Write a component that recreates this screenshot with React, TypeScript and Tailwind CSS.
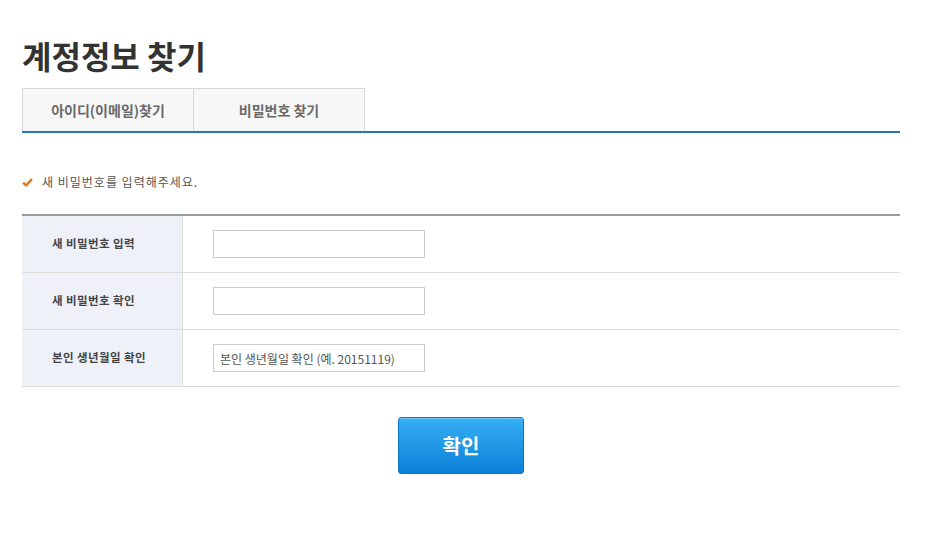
import { useState } from "react";

const font = { fontFamily: '"Noto Sans CJK KR", "Noto Sans", sans-serif' };

const rows = [
  { label: "새 비밀번호 입력", type: "password", placeholder: "" },
  { label: "새 비밀번호 확인", type: "password", placeholder: "" },
  { label: "본인 생년월일 확인", type: "text", placeholder: "본인 생년월일 확인 (예. 20151119)" },
];

const CheckMark = () => (
  <svg width="11" height="9" viewBox="0 0 11 9" className="shrink-0">
    <path d="M1 4.6 L4 7.4 L10 1.2" fill="none" stroke="#e07a1f" strokeWidth="2.6" strokeLinejoin="round" />
  </svg>
);

const App = () => {
  const [tab, setTab] = useState(1);
  const tabs = ["아이디(이메일)찾기", "비밀번호 찾기"];

  return (
    <div className="w-[926px] h-[540px] bg-white pl-[22px] pr-[26px] pt-[36px]" style={font}>
      <h1 className="text-[32px] leading-[38px] font-bold text-[#333]">계정정보 찾기</h1>

      {/* Tabs */}
      <div className="mt-[14px] flex border-b-2 border-[#1e7bb4]">
        {tabs.map((t, i) => (
          <button
            key={t}
            onClick={() => setTab(i)}
            className={`h-[43px] bg-[#f7f7f7] border-t border-[#d6d6d6] text-[14px] font-bold text-[#6a6a6a] ${
              i === 0 ? "w-[172px] border-l border-r" : "w-[171px] border-r"
            }`}
          >
            {t}
          </button>
        ))}
        <span className="hidden">{tab}</span>
      </div>

      {/* Notice */}
      <div className="mt-[40px] flex items-center gap-[9px] text-[12px] tracking-[1px] text-[#555]">
        <CheckMark />
        <span>새 비밀번호를 입력해주세요.</span>
      </div>

      {/* Form table */}
      <div className="mt-[23px] border-t-2 border-[#999]">
        {rows.map((r) => (
          <div key={r.label} className="flex h-[57px] border-b border-[#ddd]">
            <div className="w-[161px] bg-[#eef1f8] border-r border-[#ddd] flex items-center pl-[30px] text-[11.5px] tracking-[0.4px] font-bold text-[#444]">
              {r.label}
            </div>
            <div className="flex-1 flex items-center pl-[30px]">
              <input
                type={r.type}
                placeholder={r.placeholder}
                className="w-[212px] h-[28px] border border-[#ccc] px-[6px] text-[12px] text-[#555] placeholder:text-[#555] outline-none"
              />
            </div>
          </div>
        ))}
      </div>

      {/* Submit */}
      <div className="mt-[30px] flex justify-center">
        <button className="w-[126px] h-[57px] rounded-[3px] border border-[#0c76c4] bg-gradient-to-b from-[#35aff2] to-[#0a80d9] text-white text-[20px] font-bold shadow-[inset_0_1px_0_rgba(255,255,255,0.3)]">
          확인
        </button>
      </div>
    </div>
  );
};

export default App;
